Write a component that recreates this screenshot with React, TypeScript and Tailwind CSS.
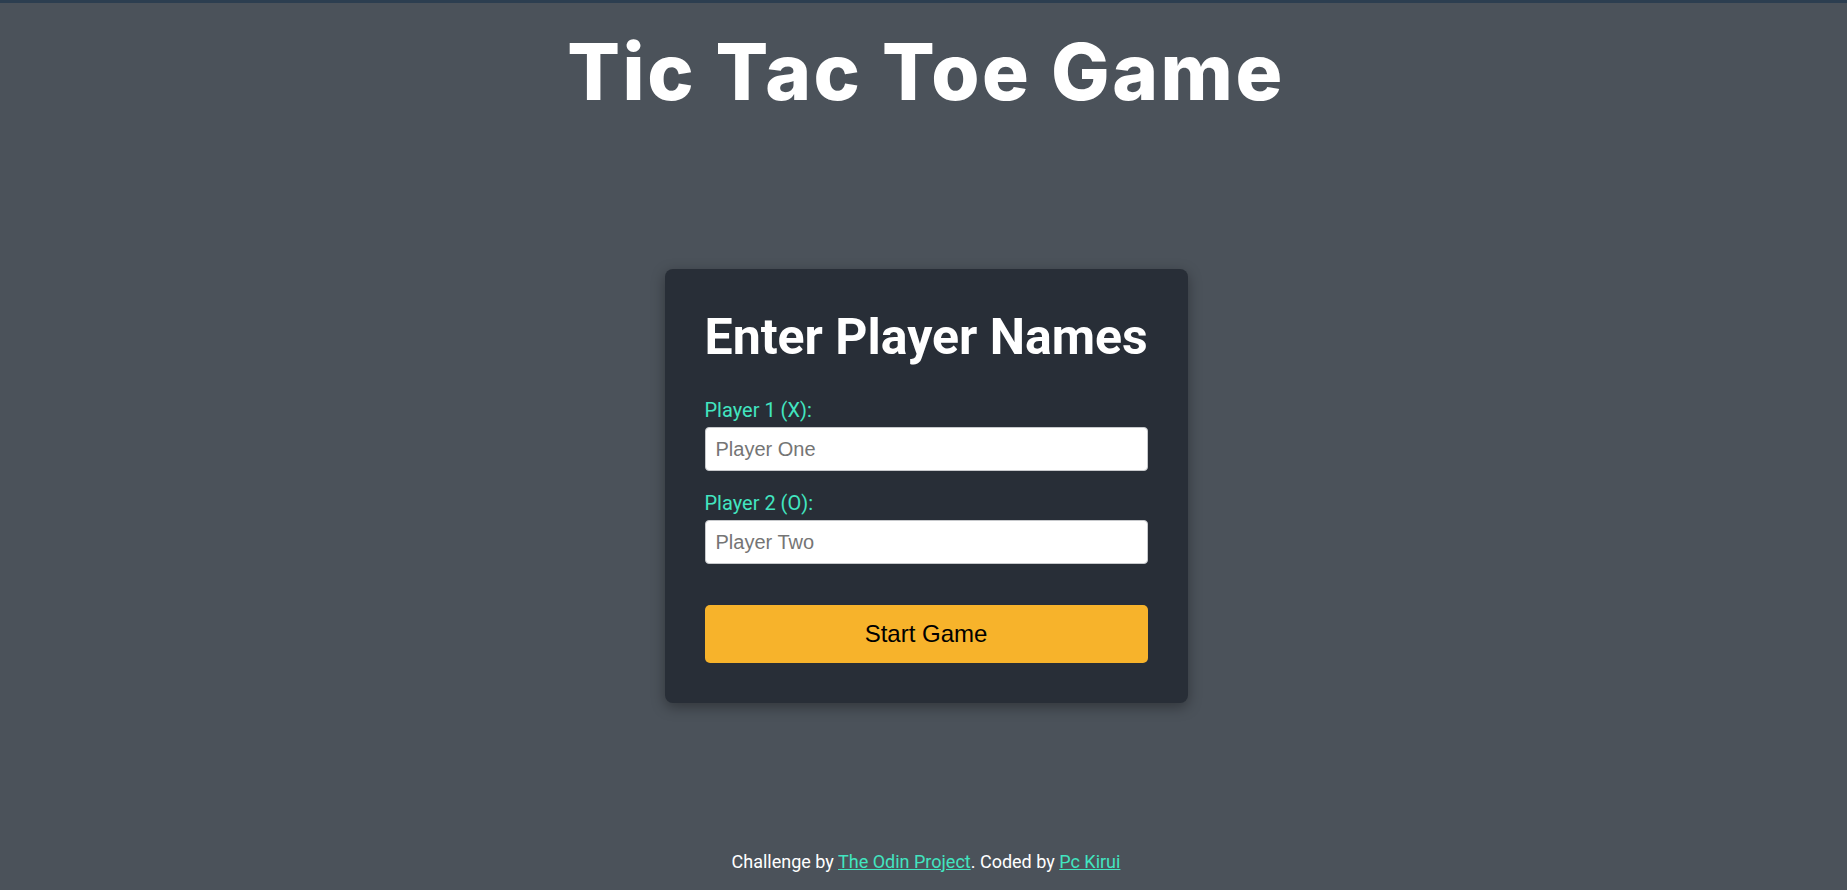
const roboto = { fontFamily: "Roboto, 'Noto Sans', sans-serif" };

function PlayerField({ label, placeholder }: { label: string; placeholder: string }) {
  return (
    <div className="flex flex-col">
      <label className="mb-[5px] text-[20px] leading-[23px] text-[#42e5c0]">{label}</label>
      <input
        type="text"
        placeholder={placeholder}
        className="h-[44px] w-full rounded-[4px] border border-[#c7c9cc] bg-white px-[10px] font-['Liberation_Sans',Arial,sans-serif] text-[20px] leading-[23px] text-gray-900 placeholder:text-[#757575] outline-none"
      />
    </div>
  );
}

export default function App() {
  return (
    <div
      className="flex min-h-screen flex-col border-t-[3px] border-[#2c3e50] bg-[#4b525a] pl-[5px] text-white"
      style={roboto}
    >
      <header className="flex h-[136px] justify-center pt-[30px]">
        <h1 className="font-['Inter',sans-serif] text-[78px] font-extrabold leading-none tracking-[2.5px]">
          Tic Tac Toe Game
        </h1>
      </header>

      <main className="flex flex-1 items-center justify-center">
        <div className="w-[523px] rounded-[8px] bg-[#282e37] p-[40px] shadow-[0_4px_14px_rgba(0,0,0,0.35)]">
          <h2 className="mb-[34px] whitespace-nowrap text-[50px] font-bold leading-[56px]">
            Enter Player Names
          </h2>
          <form className="flex flex-col gap-[21px]" onSubmit={(e) => e.preventDefault()}>
            <PlayerField label="Player 1 (X):" placeholder="Player One" />
            <PlayerField label="Player 2 (O):" placeholder="Player Two" />
            <button
              type="submit"
              className="mt-[20px] h-[58px] w-full rounded-[5px] bg-[#f7b32b] font-['Liberation_Sans',Arial,sans-serif] text-[24px] leading-[28px] text-black"
            >
              Start Game
            </button>
          </form>
        </div>
      </main>

      <footer className="py-[18px] text-center text-[18px] leading-[21px]">
        Challenge by{" "}
        <a href="#" className="text-[#42e5c0] underline">
          The Odin Project
        </a>
        . Coded by{" "}
        <a href="#" className="text-[#42e5c0] underline">
          Pc Kirui
        </a>
      </footer>
    </div>
  );
}
